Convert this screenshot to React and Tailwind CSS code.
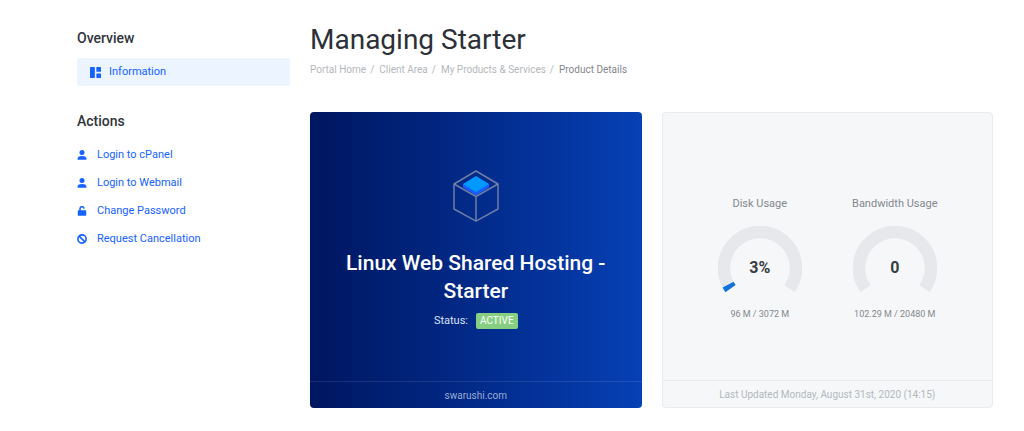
const actions = [
  { label: "Login to cPanel", icon: UserIcon },
  { label: "Login to Webmail", icon: UserIcon },
  { label: "Change Password", icon: UnlockIcon },
  { label: "Request Cancellation", icon: BanIcon },
];

const crumbs = ["Portal Home", "Client Area", "My Products & Services"];

function UserIcon({ className }) {
  return (
    <svg viewBox="0 0 10 10" fill="currentColor" className={className}>
      <circle cx="5" cy="2.6" r="2.5" />
      <path d="M0.6 9.7V8.6C0.6 6.9 2.5 6.1 5 6.1S9.4 6.9 9.4 8.6V9.7Z" />
    </svg>
  );
}

function UnlockIcon({ className }) {
  return (
    <svg viewBox="0 0 10 10" className={className}>
      <rect x="0.8" y="4.2" width="8.4" height="5.6" rx="0.6" fill="currentColor" />
      <path d="M3 5V2.8A2 2 0 0 1 7 2.6" fill="none" stroke="currentColor" strokeWidth="1.5" />
    </svg>
  );
}

function BanIcon({ className }) {
  return (
    <svg viewBox="0 0 10 10" fill="none" stroke="currentColor" strokeWidth="1.6" className={className}>
      <circle cx="5" cy="5" r="4.1" />
      <path d="M2.1 2.1L7.9 7.9" />
    </svg>
  );
}

function DashboardIcon({ className }) {
  return (
    <svg viewBox="0 0 10 10" fill="currentColor" className={className}>
      <rect x="0" y="0" width="4.4" height="10" rx="0.4" />
      <rect x="5.8" y="0" width="4.2" height="4.4" rx="0.4" />
      <rect x="5.8" y="5.8" width="4.2" height="4.2" rx="0.4" />
    </svg>
  );
}

function CubeIcon() {
  return (
    <svg viewBox="0 0 46 52" fill="none" className="w-[46px] h-[52px]">
      <path d="M10 14V17.5L23 25.5L36 17.5V14Z" fill="#1a5cff" />
      <path d="M23 6L36 14L23 22L10 14Z" fill="#0099ff" />
      <g stroke="#6d7da6" strokeWidth="1.5" strokeLinejoin="round">
        <path d="M23 1L45 14V39L23 51.2L1 39V14Z" />
        <path d="M1 14L23 26.5L45 14M23 26.5V51" />
      </g>
    </svg>
  );
}

function Gauge({ title, value, percent, detail }) {
  // 250 degree arc, open at the bottom
  const arc = "M12.5 62.6A36 36 0 1 1 71.5 62.6";

  return (
    <div className="flex w-[84px] flex-col items-center whitespace-nowrap">
      <h3 className="text-[11px] leading-4 text-[#84878d]">{title}</h3>
      <div className="relative mt-3.5">
        <svg viewBox="0 0 84 84" fill="none" strokeWidth="12.5" className="size-[84px]">
          <path d={arc} stroke="#e6e8ec" />
          {percent > 0 && (
            <path d={arc} stroke="#1471dc" pathLength="100" strokeDasharray={`${percent} 100`} />
          )}
        </svg>
        <span className="absolute inset-0 flex items-center justify-center text-[16px] font-bold text-[#393d44]">
          {value}
        </span>
      </div>
      <p className="-mt-1 text-[9px] leading-4 text-[#84878d]">{detail}</p>
    </div>
  );
}

export default function App() {
  return (
    <div className="flex gap-5 bg-white pt-6 pb-6 pl-[77px] pr-[31px] font-['Roboto',sans-serif]">
      {/* Sidebar */}
      <aside className="w-[213px] shrink-0">
        <h2 className="mt-1 text-[14px] leading-5 font-medium text-[#30343b]">Overview</h2>
        <a
          href="#information"
          className="mt-2.5 flex h-7 items-center gap-2 rounded-xs bg-[#ebf4ff] pl-[13px] text-[11px] text-[#1662ff]"
        >
          <DashboardIcon className="size-[11px]" />
          Information
        </a>

        <h2 className="mt-[25px] text-[14px] leading-5 font-medium text-[#30343b]">Actions</h2>
        <ul className="mt-2.5">
          {actions.map(({ label, icon: Icon }) => (
            <li key={label}>
              <a
                href="#action"
                className="flex h-7 items-center gap-2.5 text-[11px] text-[#1662ff]"
              >
                <Icon className="size-[10px]" />
                {label}
              </a>
            </li>
          ))}
        </ul>
      </aside>

      {/* Main content */}
      <main className="min-w-0 flex-1">
        <h1 className="text-[28px] leading-8 text-[#2c3038]">Managing Starter</h1>
        <nav className="mt-1.5 flex text-[10px] leading-4 text-[#b4b7bc]">
          {crumbs.map((crumb) => (
            <span key={crumb} className="flex">
              <a href="#crumb">{crumb}</a>
              <span className="pl-1 pr-[5px]">/</span>
            </span>
          ))}
          <span className="text-[#84878d]">Product Details</span>
        </nav>

        <div className="mt-[34px] grid grid-cols-2 gap-5">
          {/* Product */}
          <section className="flex flex-col rounded-[4px] bg-linear-to-r from-[#001660] to-[#0740b5] text-center text-white">
            <div className="flex flex-col items-center px-7 pt-[58px] pb-[52px]">
              <CubeIcon />
              <h2 className="mt-[27px] text-[21px] leading-7 font-medium">
                Linux Web Shared Hosting - Starter
              </h2>
              <div className="mt-2 flex items-center gap-2 text-[11px] leading-4">
                <span className="text-[#dbe2f2]">Status:</span>
                <span className="rounded-xs bg-[#86cf82] px-1 text-[10px]">ACTIVE</span>
              </div>
            </div>
            <div className="border-t border-white/10 pt-1.5 pb-1 text-[10px] leading-4 text-[#9aaad5]">
              swarushi.com
            </div>
          </section>

          {/* Usage */}
          <section className="flex flex-col rounded-[4px] border border-[#e9ebee] bg-[#f5f7f9] text-center">
            <div className="flex flex-1 items-center justify-center gap-[51px] pt-6">
              <Gauge title="Disk Usage" value="3%" percent={3} detail="96 M / 3072 M" />
              <Gauge title="Bandwidth Usage" value="0" percent={0} detail="102.29 M / 20480 M" />
            </div>
            <div className="border-t border-[#e9ebee] pt-1.5 pb-1 text-[10px] leading-4 text-[#b4b7bc]">
              Last Updated Monday, August 31st, 2020 (14:15)
            </div>
          </section>
        </div>
      </main>
    </div>
  );
}
